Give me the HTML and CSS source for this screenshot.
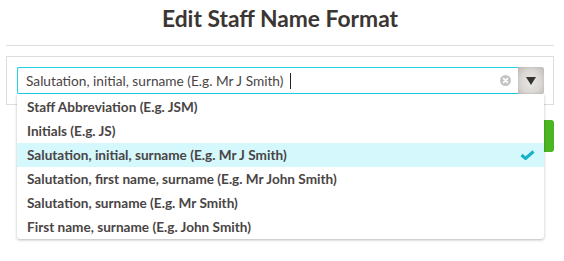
FILE: index.html
```html
<!DOCTYPE html>
<html>
<head>
<meta charset="utf-8">
<link rel="stylesheet" href="styles.css">
</head>
<body>
<div class="page">
  <h1 class="title">Edit Staff Name Format</h1>
  <div class="rule"></div>
  <div class="panel">
    <div class="combo">
      <div class="field">
        <span class="value">Salutation, initial, surname (E.g. Mr J Smith)</span>
        <span class="caret"></span>
        <span class="spacer"></span>
        <svg class="clear" width="11" height="11" viewBox="0 0 11 11">
          <circle cx="5.5" cy="5.5" r="5.5" fill="#c6c4c2"/>
          <path d="M3.6 3.6L7.4 7.4M7.4 3.6L3.6 7.4" stroke="#fff" stroke-width="1.6" stroke-linecap="round"/>
        </svg>
      </div>
      <div class="toggle">
        <svg width="10" height="8" viewBox="0 0 10 8"><path d="M0 0H10L5 8Z" fill="#333"/></svg>
      </div>
      <ul class="menu">
        <li class="opt">Staff Abbreviation (E.g. JSM)</li>
        <li class="opt">Initials (E.g. JS)</li>
        <li class="opt selected">Salutation, initial, surname (E.g. Mr J Smith)
          <svg class="check" width="15" height="10" viewBox="0 0 15 10"><path d="M1.5 5L5.5 8.5L13.5 1.5" fill="none" stroke="#17b2c9" stroke-width="3"/></svg>
        </li>
        <li class="opt">Salutation, first name, surname (E.g. Mr John Smith)</li>
        <li class="opt">Salutation, surname (E.g. Mr Smith)</li>
        <li class="opt">First name, surname (E.g. John Smith)</li>
      </ul>
    </div>
  </div>
  <div class="actions">
    <button class="save">Save</button>
  </div>
</div>
</body>
</html>
```
FILE: styles.css
```css
html, body {
  margin: 0;
  background: #fff;
}
body {
  min-height: 261px;
  font-family: "Lato", "Roboto", sans-serif;
  color: #4a4545;
}
.page {
  min-height: 261px;
  padding: 0 10px 0 6px;
}
.title {
  margin: 0;
  padding-top: 3px;
  height: 42px;
  line-height: 30px;
  font-size: 22.8px;
  font-weight: 700;
  text-align: center;
  color: #3b3634;
}
.rule {
  border-top: 1px solid #dedcdc;
}
.panel {
  margin-top: 10px;
  border: 1px solid #dedcdc;
  padding: 10px 9px 10px 10px;
}
.combo {
  position: relative;
  display: flex;
  height: 27px;
}
.field {
  flex: 1;
  display: flex;
  align-items: center;
  border: 1px solid #1ed3e8;
  border-right: none;
  border-radius: 2px 0 0 2px;
  padding-left: 8px;
  padding-right: 7px;
  font-size: 13.7px;
  line-height: 16px;
}
.value {
  white-space: nowrap;
}
.caret {
  width: 1px;
  height: 16px;
  margin-left: 7px;
  background: #222;
}
.spacer {
  flex: 1;
}
.clear {
  display: block;
}
.toggle {
  width: 26px;
  display: flex;
  align-items: center;
  justify-content: center;
  border-radius: 0 3px 3px 0;
  background: radial-gradient(ellipse at 50% 55%, #ebe9e7 0%, #d9d6d3 55%, #bdb8b4 100%);
  box-shadow: inset 0 0 1px rgba(0,0,0,.2);
}
.toggle svg {
  display: block;
}
.menu {
  position: absolute;
  top: 27px;
  left: 0;
  right: 0;
  margin: 0;
  padding: 1px 0 0;
  list-style: none;
  background: #fff;
  border-radius: 0 0 3px 3px;
  box-shadow: 0 1px 3px rgba(0,0,0,.28);
  z-index: 5;
}
.opt {
  position: relative;
  height: 24px;
  line-height: 24px;
  padding-left: 10px;
  font-size: 13.6px;
  font-weight: 700;
  white-space: nowrap;
}
.opt.selected {
  background: #d4f8fc;
}
.check {
  position: absolute;
  right: 9px;
  top: 7px;
}
.actions {
  display: flex;
  justify-content: flex-end;
  margin-top: 15px;
}
.save {
  width: 90px;
  height: 32px;
  border: none;
  border-radius: 3px;
  background: #4cb522;
  color: #fff;
  font: 700 14px "Lato", sans-serif;
}
```
